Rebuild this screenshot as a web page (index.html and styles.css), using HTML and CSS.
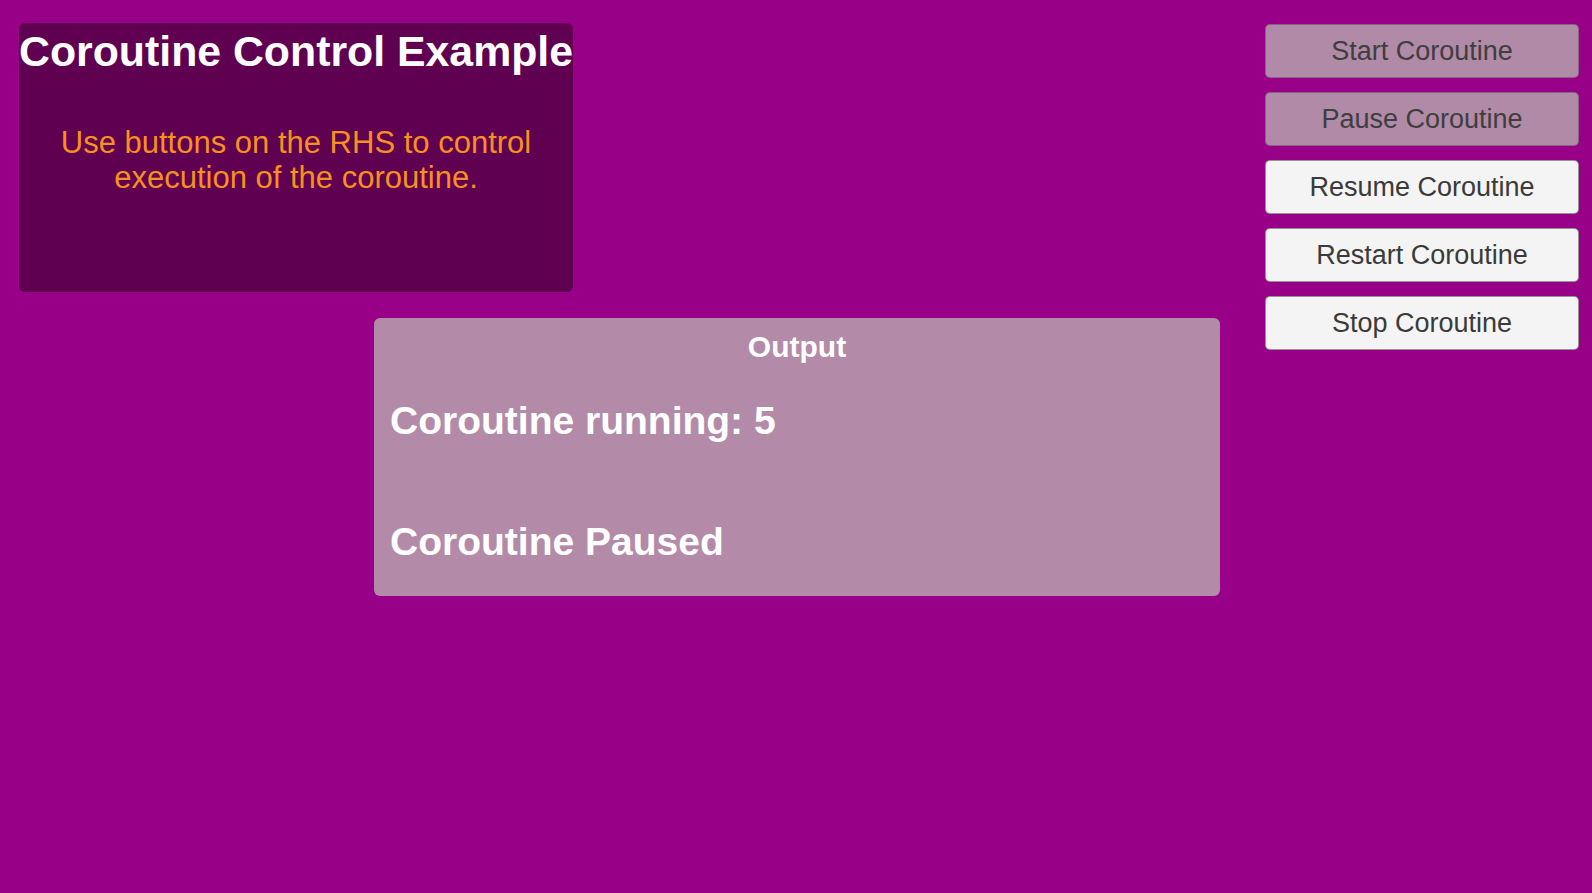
FILE: index.html
```html
<!DOCTYPE html>
<html lang="en">
<head>
<meta charset="utf-8">
<title>Coroutine Control Example</title>
<link rel="stylesheet" href="styles.css">
</head>
<body>
<div class="screen">
  <div class="main">
    <section class="info">
      <h1 class="info-title">Coroutine Control Example</h1>
      <p class="info-text">Use buttons on the RHS to control execution of the coroutine.</p>
    </section>
    <section class="output">
      <h2 class="output-title">Output</h2>
      <p class="output-line first">Coroutine running: 5</p>
      <p class="output-line second">Coroutine Paused</p>
    </section>
  </div>
  <div class="controls">
    <button class="btn disabled">Start Coroutine</button>
    <button class="btn disabled">Pause Coroutine</button>
    <button class="btn">Resume Coroutine</button>
    <button class="btn">Restart Coroutine</button>
    <button class="btn">Stop Coroutine</button>
  </div>
</div>
</body>
</html>
```
FILE: styles.css
```css
html, body {
  margin: 0;
  padding: 0;
  width: 100%;
  height: 100%;
  background: #990088;
  font-family: "Liberation Sans", Arial, sans-serif;
  overflow: hidden;
}

.screen {
  display: flex;
  flex-direction: row;
  align-items: flex-start;
  width: 1592px;
  height: 893px;
}

.main {
  display: flex;
  flex-direction: column;
  align-items: flex-start;
  width: 1220px;
}

.info {
  box-sizing: border-box;
  margin: 23px 0 0 19px;
  width: 554px;
  height: 269px;
  background: #5f0051;
  border-radius: 6px;
  padding-top: 4px;
  text-align: center;
}

.info-title {
  margin: 0;
  font-size: 42.8px;
  line-height: 48px;
  font-weight: 700;
  color: #ffffff;
  white-space: nowrap;
}

.info-text {
  margin: 50px 30px 0;
  font-size: 31px;
  line-height: 35px;
  font-weight: 400;
  color: #f7901e;
}

.output {
  box-sizing: border-box;
  margin: 26px 0 0 374px;
  width: 846px;
  height: 278px;
  background: #b38ba9;
  border-radius: 6px;
  padding: 12px 16px 0;
  color: #ffffff;
}

.output-title {
  margin: 0;
  text-align: center;
  font-size: 30px;
  line-height: 34px;
  font-weight: 700;
}

.output-line {
  margin: 0;
  font-size: 39px;
  line-height: 44px;
  font-weight: 700;
}

.output-line.first {
  margin-top: 35px;
}

.output-line.second {
  margin-top: 77px;
}

.controls {
  display: flex;
  flex-direction: column;
  gap: 14px;
  margin: 24px 0 0 45px;
  width: 314px;
}

.btn {
  box-sizing: border-box;
  display: flex;
  align-items: center;
  justify-content: center;
  height: 54px;
  width: 100%;
  padding: 0;
  border: 1px solid rgba(70, 70, 70, 0.55);
  border-radius: 5px;
  background: #f4f4f4;
  color: #3a3a3a;
  font-family: "Liberation Sans", Arial, sans-serif;
  font-size: 27px;
  font-weight: 400;
}

.btn.disabled {
  background: #b08aa7;
  color: #3e3e3e;
  border-color: rgba(90, 50, 80, 0.45);
}
```
